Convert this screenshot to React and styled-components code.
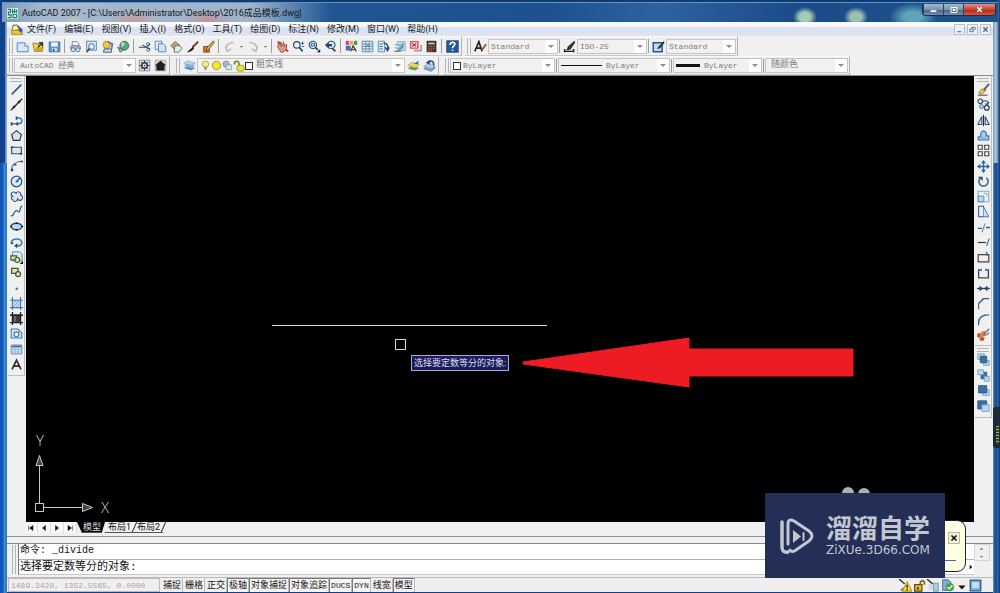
import React, { useState } from 'react';
import styled, { createGlobalStyle, css } from 'styled-components';

const GlobalStyle = createGlobalStyle`
  * { box-sizing: border-box; }
  body {
    margin: 0;
    background: #123f7c;
    font-family: Roboto, "Noto Sans CJK SC", sans-serif;
  }
  button, select, input { font-family: inherit; margin: 0; }
`;

const mono = '"Liberation Mono", "Noto Sans CJK SC", monospace';

/* window frame */
const Frame = styled.div`
  position: relative;
  display: flex;
  flex-direction: column;
  min-height: 100vh;
  padding: 0 7px 1px;
  background:
    linear-gradient(90deg, transparent 5px, #5f86ad 5px, #8fb0cf 7px, transparent 7px) 0 0 / 7px 163px no-repeat,
    linear-gradient(90deg, #0e55b8 0, #1259b4 3px, #3d8fd0 4px, #2f76b4 7px) 0 163px / 7px 100% no-repeat,
    linear-gradient(90deg, #7f9dbb 0, #b4c9dc 3px, #5d82a8 5px, #1b4577 6px) 100% 0 / 7px 163px no-repeat,
    linear-gradient(90deg, #6f9cc4 0, #17468a 2px, #1d5aa0 4px, #2d6cab 5px, #123e78 6px) 100% 163px / 7px 100% no-repeat,
    #0f418e;
`;
const TitleBar = styled.header`
  display: flex;
  align-items: center;
  height: 22px;
  margin: 0 -5px;
  padding: 2px 0 0 5px;
  border-top: 2px solid #0f3c70;
  box-shadow: inset 0 1px 0 #6b92bd;
  background:
    radial-gradient(ellipse 24px 10px at 131px 18px, #d88a7c99, transparent),
    radial-gradient(ellipse 26px 10px at 206px 18px, #d8776f88, transparent),
    radial-gradient(ellipse 10px 8px at 72px 20px, #dcd59a88, transparent),
    radial-gradient(ellipse 12px 10px at calc(100% - 193px) 15px, #a6c9b8 45%, transparent),
    radial-gradient(ellipse 12px 10px at calc(100% - 142px) 15px, #9dc0b1 45%, transparent),
    radial-gradient(ellipse 24px 14px at calc(100% - 85px) 15px, #5fa5ba 35%, transparent),
    linear-gradient(90deg, #7d9bbd 0, #a5b8cd 40px, #9fb3ca 250px, #5b82ae 292px, #1f5693 330px, #1d5190 55%, #2c639e 66%, #1b4b89 80%, #1c5390);
`;
const Title = styled.h1`
  flex: 1;
  margin: 0 0 0 4px;
  font-size: 9px;
  font-weight: 400;
  line-height: 16px;
  color: #101820;
  white-space: nowrap;
`;
const Caption = styled.div`
  display: flex;
  align-self: flex-start;
  height: 12px;
  margin-right: 2px;
  border: 1px solid #17304f;
  border-top: 0;
  border-radius: 0 0 4px 4px;
  overflow: hidden;
`;
const CaptionButton = styled.button`
  display: flex;
  align-items: center;
  justify-content: center;
  width: ${(p) => (p.$close ? 32 : 20)}px;
  padding: 0;
  border: 0;
  border-left: 1px solid #2a4566;
  background: ${(p) => (p.$close
    ? 'linear-gradient(#dc9488, #c9442f 50%, #b02a18 55%, #d6583c)'
    : 'linear-gradient(#a5b8cc, #7c94ae 50%, #48678a 55%, #718fad)')};
`;

/* menu */
const MenuBar = styled.nav`
  display: flex;
  align-items: center;
  height: 14px;
  padding-left: 4px;
  background: linear-gradient(#fbfcfe 0, #f4f6fb 4px, #d9e0f0 6px, #dfe4f1 100%);
`;
const Menus = styled.div`
  display: flex;
  flex: 1;
  gap: 8px;
  margin-left: 3px;
`;
const MenuItem = styled.button`
  padding: 0;
  border: 0;
  background: none;
  font-size: 9px;
  line-height: 14px;
  color: #15181f;
  white-space: nowrap;
`;
const MdiButton = styled.button`
  display: flex;
  align-items: center;
  justify-content: center;
  width: 11px;
  height: 11px;
  margin-right: 2px;
  padding: 0;
  border: 1px solid #b5c2d6;
  background: #eaf1fa;
`;

/* toolbars */
const Dock = styled.div`
  background: #f0f0f0;
  border-bottom: 1px solid #8b8b8b;
`;
const DockRow = styled.div`
  display: flex;
  gap: ${(p) => (p.$last ? 4 : 3)}px;
  height: ${(p) => (p.$last ? 19 : 20)}px;
`;
const Toolbar = styled.div`
  display: flex;
  align-items: center;
  padding: 0 1px;
  border-right: 1px solid #b3b3b3;
  border-bottom: 1px solid #c9c9c9;
  border-top: 1px solid #fafafa;
`;
const Grip = styled.span`
  flex: none;
  ${(p) => (p.$flat
    ? css`height: 4px; margin: 2px 2px 0; border-top: 1px solid #b5b5b5; border-bottom: 1px solid #b5b5b5;`
    : css`width: 4px; align-self: stretch; margin: 1px 1px 1px 1px; border-left: 1px solid #b5b5b5; border-right: 1px solid #b5b5b5;`)}
`;
const Separator = styled.span`
  width: 1px;
  height: 14px;
  margin: 0 ${(p) => (p.$thin ? 1 : 2)}px;
  background: #9c9c9c;
`;
const ToolButton = styled.button`
  display: flex;
  align-items: center;
  justify-content: center;
  width: ${(p) => (p.$narrow ? 8 : 16)}px;
  padding: 0;
  border: 0;
  background: none;
`;
const Picture = styled.svg`
  display: block;
  flex: none;
  width: ${(p) => p.$size || 13}px;
  height: ${(p) => p.$size || 13}px;
  fill: none;
`;

/* drop-downs */
const ComboBox = styled.div`
  position: relative;
  width: ${(p) => p.$width}px;
  height: 15px;
`;
const ComboSelect = styled.select`
  display: block;
  appearance: none;
  width: 100%;
  height: 100%;
  padding: 0 14px 0 ${(p) => p.$indent || 2}px;
  border: 1px solid #c4c4c4;
  border-radius: 0;
  background: linear-gradient(#fdfdfd, #fdfdfd) 100% 0 / 12px 100% no-repeat, #f1f1f1;
  font-family: ${mono};
  font-size: ${(p) => (p.$large ? 9 : 8)}px;
  line-height: 13px;
  color: #7d7d7d;
`;
const ComboArt = styled.span`
  position: absolute;
  inset: 0 auto 0 3px;
  display: flex;
  align-items: center;
  pointer-events: none;
`;
const ComboArrow = styled.span`
  position: absolute;
  top: 6px;
  right: 4px;
  border: 3px solid transparent;
  border-top-color: #8f8f8f;
  border-bottom: 0;
  pointer-events: none;
`;
const Swatch = styled.span`
  width: 8px;
  height: 8px;
  border: 1px solid #333;
  background: #fff;
`;
const Stroke = styled.span`
  width: ${(p) => p.$length}px;
  height: ${(p) => p.$weight}px;
  background: #111;
`;

/* work area */
const Workspace = styled.main`
  display: flex;
  flex: 1;
  background: #f0f0f0;
`;
const Side = styled.aside`
  flex: none;
  width: ${(p) => p.$width}px;
  padding: 0 1px;
`;
const Palette = styled.div`
  display: flex;
  flex-direction: column;
  padding-bottom: 3px;
  border: solid #bdbdbd;
  border-width: 0 1px 1px 0;
`;
const PaletteGrid = styled.div`
  display: grid;
  grid-auto-rows: 1fr;
  justify-items: center;
  height: ${(p) => p.$height}px;
`;
const Canvas = styled.section`
  position: relative;
  flex: 1;
  overflow: hidden;
  background: #000;
`;
const Drawing = styled.svg`
  position: absolute;
  inset: 0;
  width: 100%;
  height: 100%;
`;
const Ucs = styled.svg`
  position: absolute;
  left: 8px;
  bottom: 0;
  width: 84px;
  height: 96px;
  fill: none;
  stroke: #c8c8c8;

  text {
    font-family: "Open Sans", sans-serif;
    font-size: 15px;
    font-weight: 300;
    fill: #d0d0d0;
    stroke: none;
  }
`;
const Prompt = styled.output`
  position: absolute;
  left: 385px;
  top: 279px;
  padding: 0 2px;
  border: 1px solid #a9a9cc;
  background: #1c1c5c;
  font-size: 9px;
  line-height: 14px;
  color: #dcdcf0;
  white-space: nowrap;
`;

/* layout tabs */
const TabStrip = styled.div`
  display: flex;
  height: 15px;
  padding-left: 18px;
  border-bottom: 1px solid #8f8f8f;
  background: #f0f0f0;
`;
const TabNav = styled.button`
  display: flex;
  align-items: center;
  justify-content: center;
  width: 13px;
  height: 11px;
  padding: 0;
  border: 0;
  border-right: 1px solid #ddd;
  background: #f7f7f7;
`;
const Tab = styled.button`
  position: relative;
  height: 11px;
  padding: 0 3px;
  border: 0;
  border-bottom: 1px solid #555;
  background: none;
  font-size: 9px;
  line-height: 10px;
  color: #111;
  white-space: nowrap;

  &::after {
    content: '';
    position: absolute;
    inset: 0 -1px 0 auto;
    width: 1px;
    background: #222;
    transform: skewX(-24deg);
  }

  ${(p) => p.$active && css`
    padding: 0 4px 0 6px;
    background: #000;
    color: #ddd;
    clip-path: polygon(0 0, 100% 0, 88% 100%, 18% 100%);
  `}
`;

/* command line */
const CommandPanel = styled.section`
  display: flex;
  height: 40px;
  padding: 7px 3px 2px 4px;
  background: linear-gradient(#f0f0f0 6px, #8a8a8a 6px, #8a8a8a 7px, #f0f0f0 7px);
`;
const CommandBox = styled.div`
  display: flex;
  flex: 1;
  flex-direction: column;
  margin-left: 1px;
  border-left: 1px solid #777;
  background: #fff;
  font-family: ${mono};
  color: #111;
`;
const History = styled.div`
  flex: 1;
  padding-left: 1px;
  border-bottom: 1px solid #b0b0b0;
  font-size: 10px;
  line-height: 14px;
`;
const CommandLine = styled.div`
  display: flex;
  align-items: center;
  height: 15px;
  padding-left: 1px;
  border-bottom: 1px solid #c8c8c8;
  font-size: 11px;
  line-height: 13px;

  input {
    flex: 1;
    min-width: 0;
    height: 12px;
    padding: 0;
    border: 0;
    outline: 0;
    font-size: 11px;
  }
`;
const Scroller = styled.div`
  display: flex;
  flex-direction: column;
  justify-content: space-between;
  width: 16px;
  height: 17px;
  padding-left: 3px;
  border: 1px solid #d5d5d5;
`;

/* status bar */
const StatusBar = styled.footer`
  display: flex;
  align-items: stretch;
  height: 15px;
  padding: 0 11px 0 1px;
  border-top: 1px solid #b9b9b9;
  background: #f0eeee;
`;
const Coordinates = styled.output`
  width: 152px;
  margin-right: 1px;
  padding-left: 2px;
  border: 1px solid #c2baba;
  font-family: ${mono};
  font-size: 8px;
  line-height: 13px;
  color: #aaa6a6;
  white-space: nowrap;
`;
const Toggle = styled.button`
  padding: 0 1px;
  border: 1px solid ${(p) => (p.$on ? '#777' : 'transparent')};
  border-bottom: 0;
  border-right-color: #bbb;
  background: ${(p) => (p.$on ? '#f6f4f4' : 'none')};
  font-family: ${(p) => (p.$code ? '"Liberation Mono", monospace' : 'inherit')};
  font-size: ${(p) => (p.$code ? 8 : 9)}px;
  line-height: 13px;
  color: #151515;
  white-space: nowrap;
`;
const Tray = styled.div`
  display: flex;
  align-items: center;
  gap: 1px;
  margin-left: auto;
`;

/* overlays */
const Balloon = styled.aside`
  position: absolute;
  right: 34px;
  bottom: 21px;
  width: 120px;
  height: 52px;
  padding: 6px 5px;
  border: 1px solid #222;
  border-radius: 9px;
  background: #ffffe1;
  text-align: right;
`;
const BalloonClose = styled.button`
  display: inline-flex;
  align-items: center;
  justify-content: center;
  width: 12px;
  height: 12px;
  padding: 0;
  border: 1px solid #b9b9a6;
  background: #f3f1dc;
`;
const BalloonRule = styled.div`
  margin-top: 14px;
  margin-right: 4px;
  border-bottom: 1px solid #4a63c8;
`;
const Badge = styled.div`
  position: absolute;
  right: 55px;
  bottom: 15px;
  display: flex;
  align-items: center;
  gap: 11px;
  width: 180px;
  height: 85px;
  padding-left: 14px;
  background: #232f57;
  color: #c3c7d0;
`;
const BadgeName = styled.div`
  font-family: "Liberation Sans", "Noto Sans CJK SC", sans-serif;
  font-size: 26px;
  font-weight: 700;
  line-height: 28px;
  white-space: nowrap;
`;
const BadgeSite = styled.div`
  font-family: "DejaVu Sans", sans-serif;
  font-size: 12px;
  line-height: 14px;
  white-space: nowrap;
`;
const Ears = styled.svg`
  position: absolute;
  right: 128px;
  bottom: 94px;
  width: 32px;
  height: 12px;
`;
const Gadget = styled.div`
  position: absolute;
  right: 0;
  top: 407px;
  width: 7px;
  height: 41px;
  border-radius: 3px 0 0 3px;
  background: repeating-linear-gradient(#8fc04a 0, #8fc04a 1px, #34491f 1px, #34491f 3px) 3px 19px / 3px 18px no-repeat, #1d2a35;
`;

const N = '#27496b';
const B = '#3f78b5';
const L = '#b9d7f2';

const glyphs = {
  app: <><rect width="16" height="16" fill="#d5efe9" /><path d="M1 2h4v4H2v4h4v4H1M8 1v7M11 1v6M14 2v5M9 9h5v5H9zM7 5h8" stroke="#197a6d" strokeWidth="1.6" /></>,
  doc: <><path d="M2 2h6l6 6v4H2z" fill="#2b57b8" /><path d="M2 4l5-2 3 6-8 2z" fill="#fff3b0" stroke="#8c7a2d" /><path d="M0 9h9l6 5H1z" fill="#f1c52e" stroke="#a8850f" /></>,
  new: <><path d="M1.500 3.500h9.500l4 4v7h-13.500z" fill="#d5e8fa" stroke={B} /><path d="M11 3.500v4h4" fill="#fff" stroke={B} /></>,
  open: <><path d="M1 4h5l1 2h6v8H3z" fill="#f7d253" stroke="#81702e" /><path d="M5 12l8-9M13 3v5M13 3l-5 1" stroke="#28302e" strokeWidth="1.600" /><path d="M3 14l3-5h9l-3 5z" fill="#cfa52e" /></>,
  save: <><path d="M1.500 2.500h13v12h-13z" fill="#5c9bd6" stroke="#2a5d99" /><path d="M4 3h8v5H4z" fill="#eef6fd" /><path d="M5 10h6v4H5z" fill="#d4dde6" /><path d="M6 11h2v3H6z" fill="#234c7a" /></>,
  plot: <><path d="M4 7V2h6l2 2v3" fill="#fff" stroke="#5c7893" /><rect x="2" y="7" width="12" height="5" rx="2" fill="#b4c2d1" stroke="#4a6580" /><circle cx="5" cy="12" r="2.500" fill="#dce6ef" stroke="#4a6580" /><circle cx="11" cy="12" r="2.500" fill="#dce6ef" stroke="#4a6580" /></>,
  preview: <><path d="M2 1.500h12v11H2z" fill="#d6e9fa" stroke={B} /><circle cx="8" cy="8" r="3.500" fill="#eef7ff" stroke={N} /><path d="M5.500 10.500L2 15" stroke={N} strokeWidth="2" /></>,
  publish: <><circle cx="7" cy="6" r="4.500" fill="#f4c73e" stroke="#a7821c" /><path d="M4 11h9v4H3z" fill="#ccdaea" stroke={N} /><path d="M8 2l6 3-1 6" stroke={B} strokeWidth="2" /></>,
  globe: <><circle cx="9" cy="7" r="5.500" fill="#5ca774" stroke="#2c6b57" /><path d="M5 4c3-3 5 0 4 2s-3 1-3 4" fill="#b4d8ed" /><path d="M1 9l7 3-4 3z" fill="#b0bac5" stroke={N} /></>,
  cut: <><path d="M1 9h9l5-4M5 6l10 5" stroke={N} strokeWidth="1.300" /><circle cx="12.500" cy="12" r="1.800" stroke={N} /><circle cx="12.500" cy="5" r="1.800" stroke={N} /></>,
  copy: <><path d="M1.500 1.500h8v10h-8z" fill="#eaf3fc" stroke={B} /><path d="M5.500 4.500h6l3 3v7h-9z" fill="#cfe3f6" stroke={B} /></>,
  paste: <><path d="M1 7l5-5 6 4-5 7z" fill="#bda86d" stroke="#6b5c36" /><path d="M6 7h6l3 3-4 5H5z" fill="#dcebe4" stroke="#4f6b62" /></>,
  brush: <><path d="M15 2L8 9" stroke="#6f4228" strokeWidth="2.500" /><path d="M9 8L2 14l-1 1c4 0 7-2 9-5z" fill="#222" /></>,
  blockedit: <><path d="M2 8h7v7H2z" fill="#e0762f" stroke="#85380f" /><path d="M14 1L6 10l-1 3 3-1 7-9z" fill="#f2c14a" stroke="#5b3d10" /></>,
  undo: <path d="M5 14C2 7 7 3 13 3M3 8l2 6 5-3" stroke="#b9bcbf" strokeWidth="2" />,
  redo: <path d="M11 14C14 7 9 3 3 3M13 8l-2 6-5-3" stroke="#b9bcbf" strokeWidth="2" />,
  down: <path d="M4 7h8l-4 4z" fill="#777" />,
  pan: <><path d="M3 4l4 4-2-6 4 5V2l2 6 2-3v6l-4 4H6L2 9z" fill="#d99a84" stroke="#9b4b3c" /><path d="M2 2l4 3M12 12l3 2" stroke="#a62f3d" strokeWidth="2" /></>,
  zoomrt: <><circle cx="6" cy="6" r="4" fill="#e3f1fb" stroke={N} strokeWidth="1.400" /><path d="M9 9l4 5" stroke={N} strokeWidth="2.200" /><path d="M11 4h4M13 2v4M12 8h3" stroke={N} /></>,
  zoomwin: <><circle cx="6" cy="6" r="4.500" fill="#d2e6f5" stroke={N} strokeWidth="1.400" /><path d="M4 4.500h4v3H4z" stroke={N} /><path d="M9 9l3 3" stroke={N} strokeWidth="2.200" /><path d="M15 11v4h-4z" fill="#111" /></>,
  zoomprev: <><circle cx="9" cy="6" r="4.500" fill="#e3f1fb" stroke={N} strokeWidth="1.400" /><path d="M10 10l4 4" stroke={N} strokeWidth="2.200" /><path d="M1 6l5-4v3h4v3H6v3z" fill={N} /></>,
  props: <><path d="M1 1h4v5H1z" fill="#d43f8f" /><path d="M6 1h4v5H6z" fill="#e9b421" /><path d="M11 1h4v5h-4z" fill="#3b9c57" /><path d="M1 7h6v6H1z" fill="#4e6bc2" /><path d="M7 14l3-7 4 7M8 12h5" stroke="#333" strokeWidth="1.400" /></>,
  center: <><path d="M1.500 1.500h13v13h-13z" fill="#e1eef8" stroke={B} /><path d="M6 2v12M2 5h12M2 8h12M2 11h12M10 2v12" stroke="#587fa3" /><path d="M7 6h3v2H7z" fill="#589a6a" /></>,
  palettes: <><path d="M1.500 1.500h8v13h-8z" fill="#e1eef8" stroke={B} /><path d="M3 5h4M3 8h4M3 11h4" stroke={N} /><path d="M8 4c5 0 6 3 5 7M10 9l3 4 2-4" stroke="#284e78" strokeWidth="1.800" /></>,
  sheets: <><path d="M5 2h10v11H9z" fill="#c5deed" stroke="#7fa2ba" /><path d="M1 5h9l3 2H4zM1 9h9l3 2H4z" fill="#91b7cf" /><path d="M13 2v7l-5 5H2l5-3z" fill="#6b95af" /><path d="M1 14h9" stroke="#577f47" /></>,
  markup: <><path d="M2 2h9v8H2z" fill="#fdebee" stroke="#d45262" strokeWidth="1.800" /><path d="M4 4l5 4M9 4L4 8" stroke="#cf2f45" strokeWidth="1.500" /><path d="M6 13h9V6" stroke="#c98b96" strokeWidth="2" /></>,
  calc: <><path d="M2 1h12v14H2z" fill="#2f3034" /><path d="M4 3h8v2.500H4z" fill="#9fcc86" /><path d="M4 8h2M7 8h2M10 8h2M4 11h2M7 11h2M10 11h2M4 13.500h2M7 13.500h2" stroke="#e8584c" strokeWidth="1.600" /></>,
  help: <><rect x="1" y="1" width="14" height="14" fill="#205a9a" stroke="#123a6c" /><path d="M5 6c0-4 6-4 6-1 0 2-3 2-3 5M8 12v1.500" stroke="#fff" strokeWidth="2" /></>,
  textstyle: <><path d="M1 14L6 2l4 12M3 10h6" stroke="#222" strokeWidth="2" /><path d="M15 5l-5 7" stroke="#a65d2e" strokeWidth="2.500" /></>,
  dimstyle: <><path d="M1 14h13M2 11v4M13 11v4" stroke="#222" strokeWidth="1.800" /><path d="M14 1L6 8l-2 5 5-1 6-9z" fill="#333" /></>,
  tablestyle: <><path d="M1.500 3.500h11v11h-11z" fill="#bcd8f3" stroke="#28558f" strokeWidth="1.800" /><path d="M15 1L8 8l-2 3 4-1 5-6z" fill="#333" /></>,
  gear: <><path d="M1.500 1.500h13v13h-13z" fill="#dce3ea" stroke="#777" /><circle cx="8" cy="8" r="3.500" stroke="#26384a" strokeWidth="1.800" /><circle cx="8" cy="8" r="1" fill="#26384a" /><path d="M8 2v3M8 11v3M2 8h3M11 8h3M4 4l2 2M10 10l2 2M12 4l-2 2M6 10l-2 2" stroke="#26384a" strokeWidth="1.300" /></>,
  home: <><path d="M1.500 1.500h13v13h-13z" fill="#d6d6d6" stroke="#888" strokeDasharray="2 1" /><path d="M1 8l7-6 7 6h-2v6H3V8z" fill="#1d1d1f" /></>,
  layers: <><path d="M1 11l5-3 9 3-5 3z" fill="#5a8fba" /><path d="M1 8l5-3 9 3-5 3z" fill="#89b3d3" /><path d="M1 5l5-3 9 3-5 3z" fill="#b5d2e7" stroke="#719ab8" strokeWidth=".6" /></>,
  bulb: <><circle cx="8" cy="6" r="4.500" fill="#fff27b" stroke="#96863e" /><path d="M6 10h4v4H6z" fill="#8893a0" /></>,
  sun: <circle cx="8" cy="8" r="6" fill="#f4ea24" stroke="#9b9630" strokeWidth="1.400" />,
  freeze: <><circle cx="6" cy="6" r="4.500" fill="#a7bdc9" stroke="#6e8793" /><path d="M6 7h8v7H6z" fill="#d9e7ee" stroke="#738d9a" /></>,
  lock: <><path d="M2 6V3q4-3 6 1v4" stroke="#777c24" strokeWidth="2" /><rect x="5" y="7" width="10" height="8" rx="3" fill="#e2e333" stroke="#8d8c24" /></>,
  layerset: <><path d="M1 12l5-4 9 3-5 3z" fill="#6f9c4a" /><path d="M1 8l5-4 9 3-5 4z" fill="#e9d75b" stroke="#958740" strokeWidth=".6" /><path d="M8 6l6-4v4z" fill="#3d75a7" /></>,
  layerprev: <><path d="M1 12l5-4 9 3-5 4z" fill="#86aac4" stroke="#507b9c" /><path d="M1 9l5-3 9 3-5 3z" fill="#b5d2e7" stroke="#507b9c" strokeWidth=".6" /><path d="M13 8c1-5-3-7-7-4" stroke="#2f5c8a" strokeWidth="2" /><path d="M8 1L3 5l6 2z" fill="#2f5c8a" /></>,

  line: <path d="M2 14L14 2" stroke="#255588" strokeWidth="1.800" />,
  xline: <><path d="M1 15L15 1" stroke="#222" strokeWidth="1.600" /><path d="M4 10l2 2M10 4l2 2" stroke="#222" strokeWidth="2.500" /></>,
  pline: <><path d="M1 12h9c6 0 6-7 1-7H8" stroke={B} strokeWidth="1.800" /><path d="M2 10v4M9 10v4M8 3v4" stroke={N} strokeWidth="2" /></>,
  polygon: <path d="M8 2l6 5-2 7H4L2 7z" fill="#d9e2ea" stroke="#26384a" strokeWidth="1.400" />,
  rect: <><path d="M2 4h12v8H2z" fill="#d9e8f5" stroke="#275680" strokeWidth="1.400" /><path d="M1 3h3v2H1zM12 11h3v2h-3z" fill="#1d3b59" /></>,
  arc: <><path d="M2 14C2 7 7 3 14 3" stroke={B} strokeWidth="1.600" /><path d="M1 12h3v3H1zM5 6h3v2H5zM13 2h3v2h-3z" fill={N} /></>,
  circle: <><circle cx="8" cy="8" r="6.500" fill="#dbeaf7" stroke="#245583" strokeWidth="1.500" /><path d="M8 8l4-4M7 8h3" stroke="#245583" strokeWidth="1.800" /></>,
  cloud: <path d="M4 8C0 7 1 2 5 2.500c1 0 2 1 2.500 1.500C9 1 14 2 13 6c3 1 3 5 1 6-2 2-4 0-4.500-1C9 15 4 15 3.500 12 1 12 1 8 4 8z" fill="#dbe7f3" stroke="#31577e" strokeWidth="1.400" />,
  spline: <path d="M1 13c4 2 4-7 7-6s3 3 4 0 1-5 3-6" stroke="#315b87" strokeWidth="1.500" />,
  ellipse: <><ellipse cx="8" cy="8" rx="6.500" ry="4" fill="#bcd6ef" stroke="#255079" strokeWidth="1.700" /><path d="M0 8h2M14 8h2M8 3v2M8 11v2" stroke="#111" strokeWidth="2" /></>,
  ellarc: <><path d="M2 9C1 4 7 3 11 4s5 6 1 8H8" stroke={B} strokeWidth="1.800" /><path d="M9 9v6l-4-3z" fill={N} /><path d="M1 8h3v2H1z" fill={N} /></>,
  insert: <><path d="M3 1h9l3 3v8H3z" fill="#d8e8f7" stroke={B} /><path d="M1 6h7v5H1z" fill="#dbe8a8" stroke="#3f5a2d" strokeWidth="1.400" /><circle cx="9" cy="11" r="3" fill="#dbe8a8" stroke="#3f5a2d" strokeWidth="1.400" /><path d="M16 12v4h-4z" fill="#111" /></>,
  block: <><path d="M2 3h8v6H2z" fill="#dfe9b8" stroke="#3f5a2d" strokeWidth="1.500" /><circle cx="10" cy="10" r="3" fill="#dfe9b8" stroke="#3f5a2d" strokeWidth="1.500" /></>,
  point: <path d="M7 7h2.500v2.500H7z" fill="#235c9c" />,
  hatch: <><path d="M3 3h10v10H3z" fill="#c3dcf3" /><path d="M3 0v16M13 0v16M0 4h16M0 13h16" stroke={B} strokeWidth="1.400" /><path d="M4 12l8-8M4 8l4-4M8 12l4-4" stroke="#6fa1d0" /></>,
  gradient: <><path d="M3 3h10v10H3z" fill="#3a3e42" /><path d="M3 0v16M13 0v16M0 4h16M0 13h16" stroke="#222" strokeWidth="1.600" /><path d="M6 5v7" stroke="#888" strokeWidth="1.500" /></>,
  region: <><path d="M1.500 2.500h8l5 5v6h-13z" fill="#d5e7f8" stroke={B} strokeWidth="1.300" /><circle cx="8" cy="9" r="3" fill="#fff" stroke={B} strokeWidth="1.500" /></>,
  table: <><path d="M1.500 2.500h13v11h-13z" fill="#d6e7f7" stroke={B} /><path d="M2 3h12v2.500H2z" fill={B} /><path d="M6 5v8M10 5v8M2 8h12M2 11h12" stroke="#8ab0d5" /></>,
  mtext: <path d="M2.500 14L8 2.500 13.500 14M4.500 10h7" stroke="#2c2c2c" strokeWidth="2" />,

  erase: <><path d="M15 1L8 9" stroke="#6a6460" strokeWidth="2.500" /><path d="M6 7l4 3-5 4-3-2z" fill="#edcf55" stroke="#877128" /><path d="M9 6l2 3" stroke="#c05038" strokeWidth="1.500" /><path d="M1 15h12" stroke="#555" strokeWidth="1.400" /></>,
  copyobj: <><circle cx="4" cy="4" r="2.800" stroke={N} strokeWidth="1.400" /><circle cx="12" cy="12" r="3" stroke={N} strokeWidth="1.600" /><circle cx="5.500" cy="10.500" r="2.200" stroke={N} strokeWidth="1.200" /><path d="M7 4c6-2 7 1 6 4M10 7l3 1 2-3" stroke={N} strokeWidth="1.300" /></>,
  mirror: <><path d="M6 3v10H1zM10 3v10h5z" fill="#dbe6f0" stroke="#34526f" strokeWidth="1.300" /><path d="M8 1v14" stroke="#222" strokeWidth="1.200" /></>,
  offset: <><path d="M1.500 13.500v-4h3c-1-10 8-9 7-1h3v5z" fill="#a4c9ed" stroke="#3a74ad" strokeWidth="1.400" /><path d="M5 11h6" stroke="#7eabd8" strokeWidth="1.400" /></>,
  array: <path d="M1.500 1.500h5v5h-5zM9.500 1.500h5v5h-5zM1.500 9.500h5v5h-5zM9.500 9.500h5v5h-5z" fill="#fff" stroke="#444" strokeWidth="1.400" />,
  move: <><path d="M8 2v12M2 8h12" stroke="#2566a5" strokeWidth="1.800" /><path d="M8 0l3 4H5zM8 16l3-4H5zM0 8l4-3v6zM16 8l-4-3v6z" fill="#2566a5" /></>,
  rotate: <><path d="M11.500 3.500a5.700 5.700 0 11-7 0" stroke="#43779f" strokeWidth="2.200" /><path d="M1 2h6v5z" fill="#284e75" /></>,
  scale: <><path d="M1.500 1.500h13v13h-13z" fill="#edf4fb" stroke="#8fa9c2" strokeWidth="1.400" /><path d="M1.500 7.500h7v7h-7z" fill="#bcd7ef" stroke="#4c7ba8" /><path d="M8 4h4v4" stroke="#6f99bf" /></>,
  stretch: <><path d="M2 1.500h6v13H2z" fill="#e8f1f8" stroke={N} strokeWidth="1.200" /><path d="M8 2l6.500 12.500H8" fill="#d0e2f2" stroke={B} strokeWidth="1.200" /></>,
  trim: <><path d="M1 9h5M11 8h5" stroke="#2a6397" strokeWidth="1.600" /><path d="M6 14L10 3" stroke="#4f84b1" strokeWidth="1.300" /><path d="M6 9h4" stroke="#9eb8ce" strokeDasharray="1 1" /></>,
  extend: <><path d="M1 8h10" stroke="#333" strokeWidth="1.400" /><path d="M12 12l3-9" stroke="#3a7bb5" strokeWidth="1.500" /></>,
  breakpt: <><path d="M1.500 4.500h13v9h-13z" fill="#f1f1f1" stroke="#444" strokeWidth="1.500" /><path d="M12 1v5" stroke={B} strokeWidth="2" /></>,
  break: <><path d="M5 3.500H2v10h12v-10h-3" fill="#eef2f5" stroke="#3d4750" strokeWidth="1.600" /><path d="M5 2v3M11 2v3" stroke={B} strokeWidth="2" /></>,
  join: <><path d="M0 8h16" stroke="#24425f" strokeWidth="1.600" /><path d="M3 4.500L7.500 8 3 11.500zM13 4.500L8.500 8l4.500 3.500z" fill="#24425f" /></>,
  chamfer: <><path d="M2 15V8l6-6h7" stroke="#555" strokeWidth="1.300" /><path d="M2 8l6-6" stroke={B} strokeWidth="1.800" /></>,
  fillet: <><path d="M2 15V10C3 4 8 3 11 2.500h4" stroke="#444" strokeWidth="1.400" /><path d="M2 11C3 4 8 3 11 2.500" stroke={B} strokeWidth="2" /></>,
  explode: <><path d="M1 7h4v4H1zM6 5h4v4H6zM4 11h4v4H4z" fill="#d9602c" stroke="#9f3724" /><path d="M3 6l7 7M9 3l-5 9" stroke="#f0a13c" strokeWidth="1.300" /><path d="M10 6l5-5M11 9l4-3" stroke="#6a8fb0" strokeWidth="2" /></>,
  front: <><path d="M1 1h8v7H1zM8 9h7v6H8z" fill={L} stroke="#6a9cc9" /><path d="M4 4h8v8H4z" fill="#3d6fa5" stroke="#28527f" /></>,
  back: <><path d="M5 4h7v8H5z" fill="#3d6fa5" stroke="#28527f" /><path d="M1 1h7v6H1zM9 9h6v6H9z" fill={L} stroke="#6a9cc9" /></>,
  above: <><path d="M7 7h8v7H7z" fill={L} stroke="#6a9cc9" /><path d="M2 2h10v9H2z" fill="#3d6fa5" stroke="#28527f" /></>,
  under: <><path d="M1 1h11v10H1z" fill="#3d6fa5" stroke="#28527f" /><path d="M6 6h9v8H6z" fill={L} stroke="#6a9cc9" /></>,

  first: <path d="M3 3v10M12 3v10L5 8z" fill="#111" stroke="#111" />,
  prev: <path d="M11 3v10L5 8z" fill="#111" stroke="#111" />,
  next: <path d="M5 3v10l6-5z" fill="#111" stroke="#111" />,
  last: <path d="M13 3v10M4 3v10l7-5z" fill="#111" stroke="#111" />,
  up: <path d="M4 10h8L8 6z" fill="#555" />,
  min: <path d="M3 11h10" stroke="#fff" strokeWidth="3" />,
  max: <path d="M2 3h12v10H2zM6 7h4v2H6z" stroke="#fff" strokeWidth="2" />,
  close: <path d="M3 3l10 10M13 3L3 13" stroke="#fff" strokeWidth="3.500" />,
  mdimin: <path d="M3 13h9" stroke="#52657d" strokeWidth="2.500" />,
  mdirestore: <path d="M6 3h8v6M2 7h8v6H2zM6 3v3" stroke="#52657d" strokeWidth="2" />,
  mdiclose: <path d="M3 3l10 10M13 3L3 13" stroke="#52657d" strokeWidth="3" />,
  balloonclose: <path d="M3 3l10 10M13 3L3 13" stroke="#111" strokeWidth="3.200" />,
  warn: <><path d="M1 14l4-4 5 5z" fill="#4c9a5d" /><path d="M0 0l7 6" stroke="#111" strokeWidth="1.500" /><path d="M10 3l6 12H4z" fill="#f8dc31" stroke="#a1820d" /><path d="M10 7v4M10 12v2" stroke="#222" strokeWidth="1.600" /></>,
  unlock: <><path d="M9 8V4q3-4 5 0v3" stroke="#7a661a" strokeWidth="2" /><path d="M2 7h9v8H2z" fill="#e8bf24" stroke="#5f4e0d" strokeWidth="1.500" /><path d="M6 10v3" stroke="#222" strokeWidth="2" /></>,
  xref: <><path d="M0 0l8 7" stroke="#111" strokeWidth="1.500" /><path d="M2 6h7v8H2z" fill="#cfdeea" /><path d="M8 5h6v10H8z" fill="#a9cbe2" stroke="#6b94af" /></>,
  publishok: <><path d="M2 1h7l3 3v10H2z" fill="#7fb0d6" stroke="#30628f" /><circle cx="11" cy="10" r="5" fill="#46a548" /><path d="M8 10l2 2 4-4" stroke="#fff" strokeWidth="1.600" /></>,
  traydown: <path d="M4 8h9l-4.500 5z" fill="#111" />,
  screen: <><path d="M1.500 1.500h13v13h-13z" fill="#7db0df" stroke="#285a8c" strokeWidth="1.500" /><path d="M4 4h8v7H4z" fill="#c7e0f6" /></>,
};

const Icon = ({ name, size }) => (
  <Picture viewBox="0 0 16 16" $size={size} aria-hidden="true">{glyphs[name]}</Picture>
);

const Tools = ({ names }) => names.map((name, i) => {
  if (name === '|') return <Separator key={`${name}${i}`} />;
  return (
    <ToolButton key={`${name}${i}`} type="button" aria-label={name} $narrow={name === 'down'}>
      <Icon name={name} size={name === 'down' ? 7 : 13} />
    </ToolButton>
  );
});

const Combo = ({ label, value, width, indent, large, children }) => (
  <ComboBox $width={width}>
    <ComboSelect aria-label={label} defaultValue={value} $indent={indent} $large={large}>
      <option value={value}>{value}</option>
    </ComboSelect>
    {children && <ComboArt>{children}</ComboArt>}
    <ComboArrow />
  </ComboBox>
);

const SidePalette = ({ names, height }) => (
  <Palette>
    <Grip $flat />
    <PaletteGrid $height={height}><Tools names={names} /></PaletteGrid>
  </Palette>
);

const menus = ['文件(F)', '编辑(E)', '视图(V)', '插入(I)', '格式(O)', '工具(T)', '绘图(D)', '标注(N)', '修改(M)', '窗口(W)', '帮助(H)'];
const standard = ['new', 'open', 'save', '|', 'plot', 'preview', 'publish', 'globe', '|', 'cut', 'copy', 'paste', 'brush', 'blockedit', '|',
  'undo', 'down', 'redo', 'down', '|', 'pan', 'zoomrt', 'zoomwin', 'zoomprev', '|', 'props', 'center', 'palettes', 'sheets', 'markup', 'calc', '|', 'help'];
const draw = ['line', 'xline', 'pline', 'polygon', 'rect', 'arc', 'circle', 'cloud', 'spline', 'ellipse', 'ellarc', 'insert', 'block', 'point',
  'hatch', 'gradient', 'region', 'table', 'mtext'];
const modify = ['erase', 'copyobj', 'mirror', 'offset', 'array', 'move', 'rotate', 'scale', 'stretch', 'trim', 'extend', 'breakpt', 'break',
  'join', 'chamfer', 'fillet', 'explode'];
const order = ['front', 'back', 'above', 'under'];
const modes = ['捕捉', '栅格', '正交', '极轴', '对象捕捉', '对象追踪', 'DUCS', 'DYN', '线宽', '模型'];

const App = () => {
  const [tab, setTab] = useState('模型');
  const [command, setCommand] = useState('');
  const [active, setActive] = useState(['极轴', '对象捕捉', '对象追踪', 'DUCS', 'DYN', '模型']);

  const toggle = (mode) => {
    setActive(active.includes(mode) ? active.filter((m) => m !== mode) : [...active, mode]);
  };

  return (
    <Frame>
      <GlobalStyle />
      <TitleBar>
        <Icon name="app" size={11} />
        <Title>AutoCAD 2007 - [C:\Users\Administrator\Desktop\2016成品模板.dwg]</Title>
        <Caption>
          <CaptionButton type="button" aria-label="最小化"><Icon name="min" size={9} /></CaptionButton>
          <CaptionButton type="button" aria-label="最大化"><Icon name="max" size={8} /></CaptionButton>
          <CaptionButton type="button" aria-label="关闭" $close><Icon name="close" size={7} /></CaptionButton>
        </Caption>
      </TitleBar>
      <MenuBar>
        <Icon name="doc" />
        <Menus>
          {menus.map((item) => <MenuItem key={item} type="button">{item}</MenuItem>)}
        </Menus>
        {['mdimin', 'mdirestore', 'mdiclose'].map((name) => (
          <MdiButton key={name} type="button" aria-label={name}><Icon name={name} size={7} /></MdiButton>
        ))}
      </MenuBar>

      <Dock>
        <DockRow>
          <Toolbar>
            <Grip />
            <Tools names={standard} />
          </Toolbar>
          <Toolbar>
            <Grip />
            <Tools names={['textstyle']} />
            <Combo label="文字样式" value="Standard" width={70} />
            <Separator $thin />
            <Tools names={['dimstyle']} />
            <Combo label="标注样式" value="ISO-25" width={70} />
            <Separator $thin />
            <Tools names={['tablestyle']} />
            <Combo label="表格样式" value="Standard" width={70} />
          </Toolbar>
        </DockRow>
        <DockRow $last>
          <Toolbar>
            <Grip />
            <Combo label="工作空间" value="AutoCAD 经典" width={122} indent={5} />
            <Tools names={['gear', 'home']} />
          </Toolbar>
          <Toolbar>
            <Grip />
            <Tools names={['layers']} />
            <Combo label="图层" value="粗实线" width={208} indent={58} large>
              <Icon name="bulb" size={11} />
              <Icon name="sun" size={11} />
              <Icon name="freeze" size={11} />
              <Icon name="lock" size={12} />
              <Swatch />
            </Combo>
            <Tools names={['layerset', 'layerprev']} />
          </Toolbar>
          <Toolbar>
            <Grip />
            <Combo label="颜色" value="ByLayer" width={105} indent={12}><Swatch /></Combo>
            <Separator $thin />
            <Combo label="线型" value="ByLayer" width={112} indent={47}><Stroke $length={41} $weight={1} /></Combo>
            <Separator $thin />
            <Combo label="线宽" value="ByLayer" width={89} indent={30}><Stroke $length={24} $weight={3} /></Combo>
            <Separator $thin />
            <Combo label="打印样式" value="随颜色" width={83} indent={5} large />
          </Toolbar>
        </DockRow>
      </Dock>

      <Workspace>
        <Side $width={19}><SidePalette names={draw} height={290} /></Side>
        <Canvas>
          <Drawing aria-hidden="true">
            <path d="M246 249.500H521" stroke="#d8d8d8" />
            <rect x="369.500" y="263.500" width="10" height="10" fill="none" stroke="#d8d8d8" />
            <path d="M497 286L663 262V273H827V300H663V311L497 288Z" fill="#ed1c24" stroke="#ed1c24" strokeLinejoin="round" />
          </Drawing>
          <Prompt>选择要定数等分的对象:</Prompt>
          <Ucs>
            <rect x="1.500" y="77.500" width="8" height="8" />
            <path d="M5.500 77V40M9 81.500H49" />
            <path d="M5.500 29.500l3.500 10H2zM58.500 81.500l-10 -4v8z" fill="#444" />
            <text x="2" y="20">Y</text>
            <text x="67" y="87">X</text>
          </Ucs>
        </Canvas>
        <Side $width={19}>
          <SidePalette names={modify} height={260} />
          <SidePalette names={order} height={62} />
        </Side>
      </Workspace>

      <TabStrip>
        {['first', 'prev', 'next', 'last'].map((name) => (
          <TabNav key={name} type="button" aria-label={name}><Icon name={name} size={8} /></TabNav>
        ))}
        {['模型', '布局1', '布局2'].map((name) => (
          <Tab key={name} type="button" $active={tab === name} onClick={() => setTab(name)}>{name}</Tab>
        ))}
      </TabStrip>

      <CommandPanel>
        <Grip />
        <CommandBox>
          <History>命令: _divide</History>
          <CommandLine>
            <label htmlFor="command">选择要定数等分的对象:</label>
            <input id="command" value={command} onChange={(e) => setCommand(e.target.value)} />
            <Icon name="next" size={6} />
          </CommandLine>
        </CommandBox>
        <Scroller>
          <Icon name="up" size={7} />
          <Icon name="down" size={7} />
        </Scroller>
      </CommandPanel>

      <StatusBar>
        <Coordinates>1489.3420, 1352.5565, 0.0000</Coordinates>
        {modes.map((mode) => (
          <Toggle
            key={mode}
            type="button"
            aria-pressed={active.includes(mode)}
            $on={active.includes(mode)}
            $code={/^[A-Z]+$/.test(mode)}
            onClick={() => toggle(mode)}
          >
            {mode}
          </Toggle>
        ))}
        <Tray>
          {['warn', 'unlock', 'xref', 'publishok', 'traydown', 'screen'].map((name) => (
            <Icon key={name} name={name} />
          ))}
        </Tray>
      </StatusBar>

      <Balloon>
        <BalloonClose type="button" aria-label="关闭提示"><Icon name="balloonclose" size={8} /></BalloonClose>
        <BalloonRule />
      </Balloon>
      <Ears viewBox="0 0 32 12">
        <circle cx="8" cy="6" r="6" fill="#aeb2ae" />
        <circle cx="24" cy="7" r="6" fill="#aeb2ae" />
      </Ears>
      <Badge>
        <svg width="36" height="38" viewBox="0 0 36 38" fill="none" stroke="#c3c7d0" strokeWidth="3" strokeLinecap="round" strokeLinejoin="round">
          <path d="M3 5v25q0 6 6 5" strokeWidth="3.500" />
          <path d="M9 27V7q0-6 6-3l15 10q6 5 0 10L17 33q-4 3-6 0" />
          <path d="M14 13v13l8-6.500z" fill="#c3c7d0" stroke="none" />
          <path d="M24.500 16v7" strokeWidth="2" />
        </svg>
        <div>
          <BadgeName>溜溜自学</BadgeName>
          <BadgeSite>ZiXUe.3D66.COM</BadgeSite>
        </div>
      </Badge>
      <Gadget />
    </Frame>
  );
};

export default App;
